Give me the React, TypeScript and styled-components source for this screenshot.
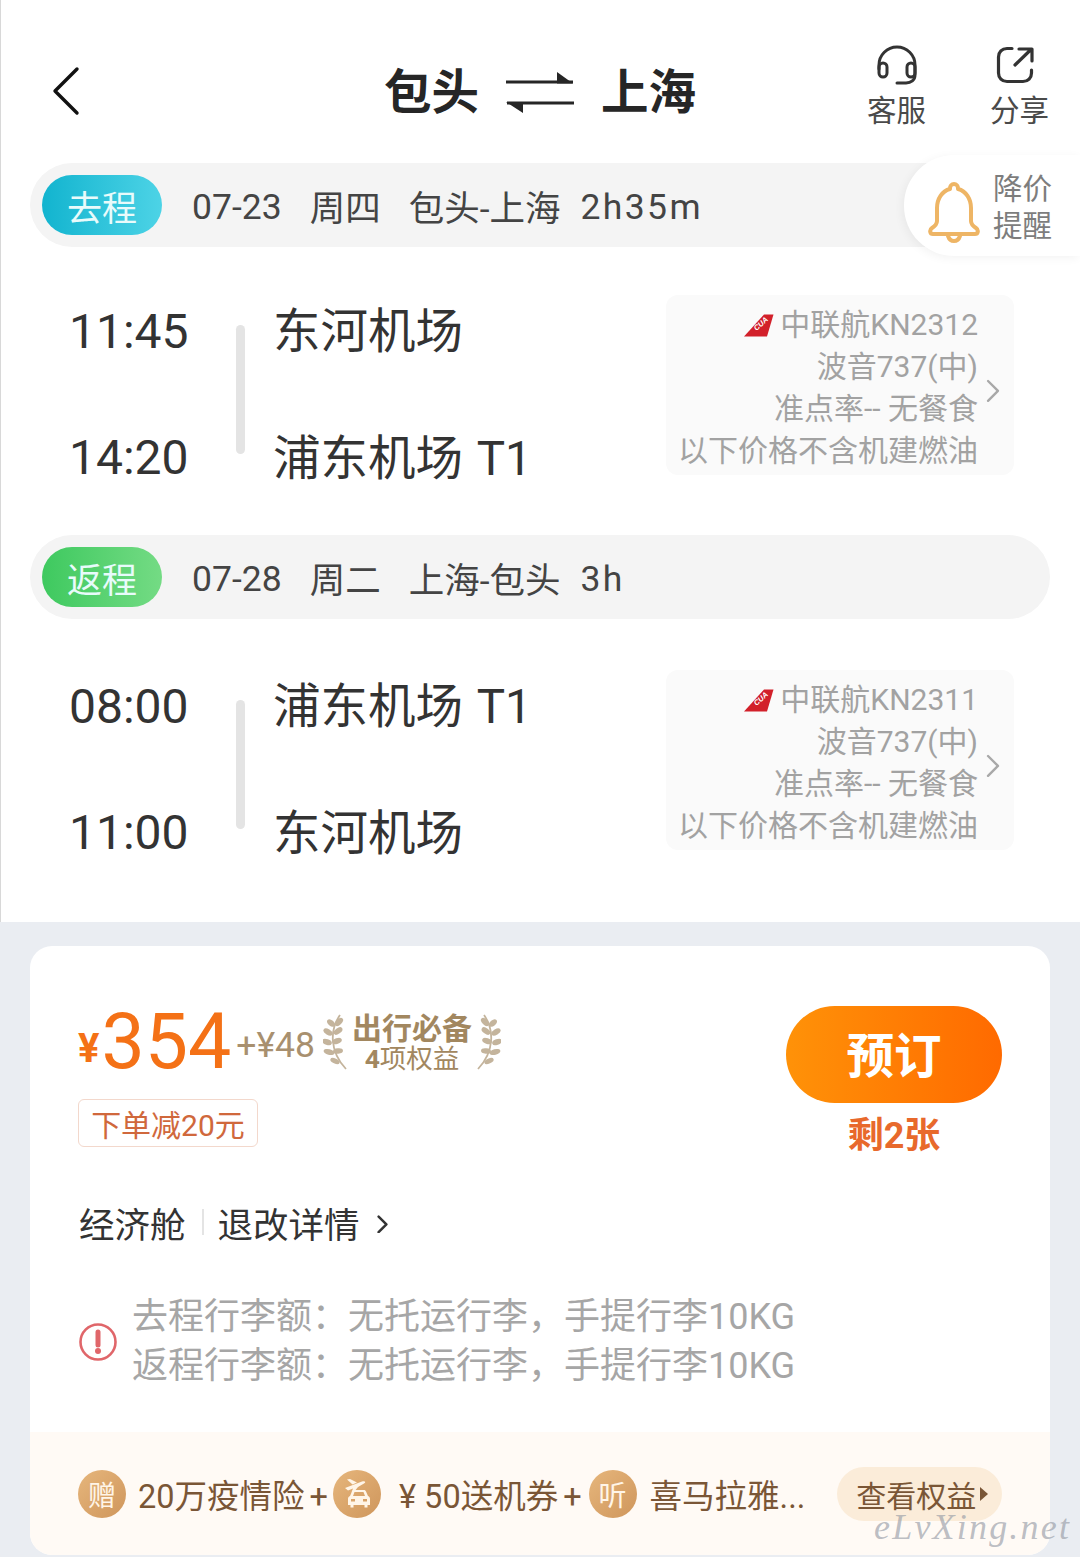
import React from 'react';
import styled, { createGlobalStyle } from 'styled-components';

const Global = createGlobalStyle`
  html, body { margin: 0; padding: 0; background: #eaedf2; }
  * { box-sizing: border-box; }
  body { font-family: Roboto, "Noto Sans CJK SC", sans-serif; }
`;

const Page = styled.div`
  position: relative;
  width: 1080px;
  height: 1557px;
  overflow: hidden;
  background: #eaedf2;
`;

const Top = styled.section`
  height: 922px;
  background: #fff;
  border-left: 1px solid #d8d8d8;
`;

const Header = styled.header`
  display: grid;
  grid-template-columns: 1fr auto 1fr;
  align-items: center;
  height: 163px;
  padding: 22px 31px 0 30px;
`;

const Back = styled.div`
  display: flex;
  align-items: center;
  margin: 0 0 4px 21px;
`;

const Title = styled.h1`
  display: flex;
  align-items: center;
  gap: 27px;
  margin: 0;
  font-size: 47.5px;
  line-height: 60px;
  font-weight: 700;
  color: #262626;
`;

const Actions = styled.div`
  display: flex;
  justify-content: flex-end;
  gap: 64px;
  margin-top: -12px;
`;

const Action = styled.div`
  display: flex;
  flex-direction: column;
  align-items: center;
  gap: 8px;
  font-size: 29.5px;
  line-height: 36px;
  color: #4a4a4a;
`;

const IconSlot = styled.div<{ $shift?: number }>`
  display: flex;
  align-items: center;
  height: 41px;
  margin-right: ${(p) => p.$shift ?? 0}px;
`;

const Segment = styled.div`
  position: relative;
  display: flex;
  align-items: center;
  height: 84px;
  margin: 0 30px 0 29px;
  padding-left: 12px;
  border-radius: 42px;
  background: #f4f4f4;
  font-size: 35.5px;
  color: #444;
`;

const Tag = styled.span<{ $from: string; $to: string }>`
  display: flex;
  align-items: center;
  justify-content: center;
  width: 120px;
  height: 60px;
  margin-right: 30px;
  border-radius: 30px;
  background: linear-gradient(90deg, ${(p) => p.$from}, ${(p) => p.$to});
  font-size: 35px;
  color: #e8fbfb;
`;

const Meta = styled.span<{ $gap: number; $digits?: boolean; $track?: number }>`
  margin-right: ${(p) => p.$gap}px;
  margin-top: ${(p) => (p.$digits ? 4 : 0)}px;
  letter-spacing: ${(p) => p.$track ?? 0}px;
  white-space: nowrap;
`;

const Alert = styled.div`
  position: absolute;
  top: -8px;
  right: -30px;
  display: flex;
  align-items: center;
  gap: 13px;
  width: 176px;
  height: 101px;
  padding-left: 24px;
  border-radius: 50px 0 0 50px;
  background: #fff;
  box-shadow: -2px 2px 10px rgba(0, 0, 0, 0.05);
`;

const AlertBell = styled.div`
  display: flex;
  margin-top: 12px;
`;

const AlertText = styled.div`
  width: 60px;
  margin-top: 4px;
  font-size: 29.5px;
  line-height: 37px;
  color: #7d7d7d;
`;

const Flight = styled.div<{ $top: number; $bottom: number }>`
  display: flex;
  align-items: center;
  height: 180px;
  margin: ${(p) => p.$top}px 66px ${(p) => p.$bottom}px 68px;
`;

const Times = styled.div`
  display: flex;
  flex-direction: column;
  gap: 64.5px;
  width: 167px;
  margin-top: 20px;
  font-size: 48px;
  line-height: 62px;
  color: #333;
`;

const Bar = styled.div`
  width: 9px;
  height: 129px;
  margin: 9px 28px 0 0;
  border-radius: 5px;
  background: #e4e4e4;
`;

const Stops = styled.div`
  display: flex;
  flex-direction: column;
  gap: 64.5px;
  margin-top: 21px;
  font-size: 47.5px;
  line-height: 62px;
  word-spacing: 2px;
  color: #333;
  white-space: nowrap;
`;

const Info = styled.div`
  position: relative;
  display: flex;
  flex-direction: column;
  align-items: flex-end;
  justify-content: center;
  width: 348px;
  height: 180px;
  margin-left: auto;
  padding: 6px 36px 0 0;
  border-radius: 12px;
  background: #fafafa;
  font-size: 30px;
  line-height: 42px;
  color: #a2a2a2;
  white-space: nowrap;
`;

const InfoLine = styled.div`
  display: flex;
  align-items: center;
  gap: 6px;
`;

const InfoChevron = styled.div`
  position: absolute;
  top: 84px;
  right: 14px;
  display: flex;
`;

const Card = styled.section`
  display: flex;
  flex-direction: column;
  height: 609px;
  margin: 24px 30px 0;
  border-radius: 22px;
  background: #fff;
  overflow: hidden;
`;

const PriceRow = styled.div`
  display: flex;
  justify-content: space-between;
  height: 254px;
  padding: 60px 48px 0;
`;

const PriceCol = styled.div`
  display: flex;
  flex-direction: column;
`;

const PriceLine = styled.div`
  display: flex;
  align-items: center;
  height: 72px;
`;

const Yen = styled.span`
  margin-top: 12px;
  font-size: 40px;
  font-weight: 700;
  color: #f47116;
`;

const Amount = styled.span`
  margin-left: 2px;
  font-size: 77px;
  line-height: 72px;
  color: #f47116;
`;

const Extra = styled.span`
  margin: 6px 8px 0 5px;
  font-size: 35.5px;
  color: #a8906f;
`;

const Perk = styled.div`
  display: flex;
  flex-direction: column;
  align-items: center;
  width: 130px;
  margin-top: 2px;
  color: #a2875f;
`;

const PerkTitle = styled.div`
  font-size: 30px;
  line-height: 32px;
  font-weight: 700;
`;

const PerkSub = styled.div`
  font-size: 26.5px;
  line-height: 28px;
`;

const Coupon = styled.div`
  display: flex;
  align-items: center;
  justify-content: center;
  width: 180px;
  height: 48px;
  margin-top: 21px;
  border: 1px solid #f3d8cc;
  border-radius: 6px;
  font-size: 30px;
  color: #d0683c;
`;

const BookCol = styled.div`
  display: flex;
  flex-direction: column;
  align-items: center;
`;

const BookButton = styled.button`
  width: 216px;
  height: 97px;
  padding: 0 0 5px;
  border: 0;
  border-radius: 49px;
  background: linear-gradient(90deg, #ff9208, #ff6a00);
  font-family: inherit;
  font-size: 47.5px;
  font-weight: 700;
  color: #fff;
`;

const SeatsLeft = styled.div`
  margin-top: 11px;
  font-size: 36px;
  line-height: 44px;
  font-weight: 700;
  color: #e8692c;
`;

const Cabin = styled.div`
  display: flex;
  align-items: center;
  height: 44px;
  padding-left: 49px;
  font-size: 35.5px;
  color: #333;
`;

const Divider = styled.span`
  width: 2px;
  height: 26px;
  margin: 0 14px 0 16px;
  background: #e4e4e4;
`;

const CabinChevron = styled.span`
  display: flex;
  margin: 4px 0 0 17px;
`;

const Baggage = styled.div`
  display: flex;
  align-items: center;
  gap: 15px;
  margin-top: 49px;
  padding-left: 49px;
  font-size: 36px;
  line-height: 49px;
  color: #a6a6a6;
  white-space: nowrap;
`;

const Benefits = styled.div`
  display: flex;
  align-items: center;
  height: 123px;
  margin-top: auto;
  padding-left: 48px;
  background: #fffaf5;
  font-size: 32.5px;
  color: #7a5636;
  white-space: nowrap;
`;

const Medal = styled.span`
  display: flex;
  align-items: center;
  justify-content: center;
  flex: none;
  width: 48px;
  height: 48px;
  border-radius: 50%;
  background: linear-gradient(135deg, #e6b67c, #cf965c);
  font-size: 28px;
  color: #fff5e8;
`;

const Benefit = styled.span<{ $left: number; $right: number }>`
  margin: 0 ${(p) => p.$right}px 0 ${(p) => p.$left}px;
`;

const Plus = styled.span`
  margin-left: 5px;
`;

const BenefitButton = styled.div`
  display: flex;
  align-items: center;
  gap: 4px;
  width: 165px;
  height: 54px;
  margin-left: 32px;
  padding-left: 19px;
  border-radius: 27px;
  background: #fbecd9;
  font-size: 30px;
  color: #7a5636;
`;

const Caret = styled.span`
  width: 0;
  height: 0;
  border-top: 7px solid transparent;
  border-bottom: 7px solid transparent;
  border-left: 8px solid #7a5636;
`;

const Watermark = styled.div`
  position: absolute;
  left: 874px;
  top: 1505px;
  font-family: "Liberation Serif", serif;
  font-style: italic;
  font-size: 36px;
  line-height: 44px;
  letter-spacing: 2.2px;
  color: rgba(150, 155, 165, 0.65);
`;

const BackIcon = () => (
  <svg width="30" height="50" viewBox="0 0 30 50" fill="none">
    <path d="M25 3 3 25l22 22" stroke="#111" strokeWidth="3.4" strokeLinecap="round" strokeLinejoin="round" />
  </svg>
);

const SwapIcon = () => (
  <svg width="68" height="42" viewBox="0 0 68 42">
    <path d="M0 10h67M1 31h67" stroke="#262626" strokeWidth="3.2" fill="none" />
    <path d="M51 0l16 11.500H51zM0 30h17v11z" fill="#262626" />
  </svg>
);

const HeadsetIcon = () => (
  <svg width="42" height="40" viewBox="0 0 42 40" fill="none" stroke="#333" strokeWidth="3" strokeLinecap="round">
    <path d="M3 24v-4a18 18 0 0 1 36 0v10c0 5-4 8-9 8h-9" />
    <rect x="3" y="18" width="8" height="14" rx="4" />
    <rect x="31" y="18" width="8" height="14" rx="4" />
  </svg>
);

const ShareIcon = () => (
  <svg width="39" height="38" viewBox="0 0 39 38" fill="none" stroke="#333" strokeWidth="3.2" strokeLinecap="round" strokeLinejoin="round">
    <path d="M16 2.500h-5C6 2.500 2.500 6 2.500 11v16c0 5 3.500 8.500 8.500 8.500h16c5 0 8.500-3.500 8.500-8.500v-3" />
    <path d="M19 19 35 3.500M23 3h13v12" />
  </svg>
);

const BellIcon = () => (
  <svg width="52" height="62" viewBox="0 0 52 62" fill="none" stroke="#eeb565" strokeWidth="4" strokeLinejoin="round" strokeLinecap="round">
    <path d="M26 3c-2.500 0-4 2-4 4v1C14 10 9 18 9 27v13c0 3-2 5-5 7-3 2-2 6 1 6h42c3 0 4-4 1-6-3-2-5-4-5-7V27c0-9-5-17-13-19V7c0-2-1.500-4-4-4z" />
    <path d="M20 55c1 3 3 5 6 5s5-2 6-5" />
  </svg>
);

const Chevron = ({ size = 14, color = '#a8a8a8', weight = 2.4 }: { size?: number; color?: string; weight?: number }) => (
  <svg width={size} height={size * 1.7} viewBox="0 0 14 24" fill="none">
    <path d="M2 2l10 10L2 22" stroke={color} strokeWidth={weight} strokeLinecap="round" strokeLinejoin="round" />
  </svg>
);

const TailLogo = () => (
  <svg width="30" height="23" viewBox="0 0 30 23">
    <path d="M0 22.500 20 .5h9.500L23 22.500z" fill="#d2202a" />
    <text x="12.500" y="17" fontSize="7.500" fontWeight="700" fontStyle="italic" fill="#fff" fontFamily="Liberation Sans, sans-serif" transform="rotate(-42 12.500 17)">CUA</text>
  </svg>
);

const Laurel = ({ flip }: { flip?: boolean }) => (
  <svg width="24" height="58" viewBox="0 0 24 58" style={flip ? { transform: 'scaleX(-1)' } : undefined}>
    <path d="M17 2C7 16 6 38 23 56" fill="none" stroke="#c4b49c" strokeWidth="1.800" />
    <g fill="#c4b49c">
      <ellipse cx="16" cy="9" rx="5" ry="2.800" transform="rotate(-45 16 9)" />
      <ellipse cx="8" cy="10" rx="4.500" ry="2.800" transform="rotate(40 8 10)" />
      <ellipse cx="15" cy="18" rx="5" ry="2.800" transform="rotate(-35 15 18)" />
      <ellipse cx="5" cy="19" rx="5" ry="2.800" transform="rotate(30 5 19)" />
      <ellipse cx="14" cy="28" rx="5" ry="2.800" transform="rotate(-20 14 28)" />
      <ellipse cx="4" cy="29" rx="5" ry="2.800" transform="rotate(20 4 29)" />
      <ellipse cx="15" cy="38" rx="5" ry="2.800" transform="rotate(-5 15 38)" />
      <ellipse cx="6" cy="39" rx="5.500" ry="2.800" transform="rotate(15 6 39)" />
      <ellipse cx="12" cy="48" rx="5" ry="2.500" transform="rotate(25 12 48)" />
    </g>
  </svg>
);

const AlertIcon = () => (
  <svg width="38" height="38" viewBox="0 0 38 38" fill="none">
    <circle cx="19" cy="19" r="17.500" stroke="#e0666a" strokeWidth="2.600" />
    <path d="M19 9v13" stroke="#e0666a" strokeWidth="5" strokeLinecap="round" />
    <circle cx="19" cy="28" r="3" fill="#e0666a" />
  </svg>
);

const TripIcon = () => (
  <svg width="28" height="30" viewBox="0 0 28 30" fill="#fff5e8">
    <path d="M2 9 19 2.500c3-1 4.500.5 2 2L15 8l-4 5-2.500.5L10 9.500 5 11.500z" />
    <path d="M4 .5 7 0l7 3.500-4.500 2z" />
    <path
      fillRule="evenodd"
      d="M7 17l2-4.500c.5-1 1-1.500 2-1.500h10c1 0 1.500.5 2 1.500l2 4.500c1.500.5 2 1.500 2 3v6h-2.500v2.500h-3V26h-11v2.500h-3V26H5v-6c0-1.500.5-2.500 2-3zM10 17h12l-1.500-4h-9zM8 20v2.500h4V20zM20 20v2.500h4V20z"
    />
  </svg>
);

type Leg = {
  top: number;
  bottom: number;
  times: [string, string];
  stops: [string, string];
  flightNo: string;
};

const FlightBlock = ({ leg }: { leg: Leg }) => (
  <Flight $top={leg.top} $bottom={leg.bottom}>
    <Times>
      <div>{leg.times[0]}</div>
      <div>{leg.times[1]}</div>
    </Times>
    <Bar />
    <Stops>
      <div>{leg.stops[0]}</div>
      <div>{leg.stops[1]}</div>
    </Stops>
    <Info>
      <InfoLine><TailLogo />{leg.flightNo}</InfoLine>
      <InfoLine>波音737(中)</InfoLine>
      <InfoLine>准点率-- 无餐食</InfoLine>
      <InfoLine>以下价格不含机建燃油</InfoLine>
      <InfoChevron><Chevron /></InfoChevron>
    </Info>
  </Flight>
);

export default function App() {
  return (
    <Page>
      <Global />
      <Top>
        <Header>
          <Back><BackIcon /></Back>
          <Title>
            <span>包头</span>
            <SwapIcon />
            <span>上海</span>
          </Title>
          <Actions>
            <Action><IconSlot $shift={-2}><HeadsetIcon /></IconSlot>客服</Action>
            <Action><IconSlot $shift={7}><ShareIcon /></IconSlot>分享</Action>
          </Actions>
        </Header>

        <Segment>
          <Tag $from="#12b4cf" $to="#4dd3e6">去程</Tag>
          <Meta $gap={28} $digits>07-23</Meta>
          <Meta $gap={28}>周四</Meta>
          <Meta $gap={20}>包头-上海</Meta>
          <Meta $gap={0} $digits $track={2.4}>2h35m</Meta>
          <Alert>
            <AlertBell><BellIcon /></AlertBell>
            <AlertText>降价提醒</AlertText>
          </Alert>
        </Segment>

        <FlightBlock
          leg={{
            top: 48,
            bottom: 60,
            times: ['11:45', '14:20'],
            stops: ['东河机场', '浦东机场 T1'],
            flightNo: '中联航KN2312',
          }}
        />

        <Segment>
          <Tag $from="#3ec95f" $to="#74db84">返程</Tag>
          <Meta $gap={28} $digits>07-28</Meta>
          <Meta $gap={28}>周二</Meta>
          <Meta $gap={20}>上海-包头</Meta>
          <Meta $gap={0} $digits $track={2.4}>3h</Meta>
        </Segment>

        <FlightBlock
          leg={{
            top: 51,
            bottom: 0,
            times: ['08:00', '11:00'],
            stops: ['浦东机场 T1', '东河机场'],
            flightNo: '中联航KN2311',
          }}
        />
      </Top>

      <Card>
        <PriceRow>
          <PriceCol>
            <PriceLine>
              <Yen>¥</Yen>
              <Amount>354</Amount>
              <Extra>+¥48</Extra>
              <Laurel />
              <Perk>
                <PerkTitle>出行必备</PerkTitle>
                <PerkSub><b>4</b>项权益</PerkSub>
              </Perk>
              <Laurel flip />
            </PriceLine>
            <Coupon>下单减20元</Coupon>
          </PriceCol>
          <BookCol>
            <BookButton>预订</BookButton>
            <SeatsLeft>剩2张</SeatsLeft>
          </BookCol>
        </PriceRow>

        <Cabin>
          经济舱
          <Divider />
          退改详情
          <CabinChevron><Chevron size={11} color="#333" weight={3.2} /></CabinChevron>
        </Cabin>

        <Baggage>
          <AlertIcon />
          <div>
            <div>去程行李额：无托运行李，手提行李10KG</div>
            <div>返程行李额：无托运行李，手提行李10KG</div>
          </div>
        </Baggage>

        <Benefits>
          <Medal>赠</Medal>
          <Benefit $left={12} $right={5}>20万疫情险<Plus>+</Plus></Benefit>
          <Medal><TripIcon /></Medal>
          <Benefit $left={18} $right={7}>¥ 50送机券<Plus>+</Plus></Benefit>
          <Medal>听</Medal>
          <Benefit $left={13} $right={0}>喜马拉雅...</Benefit>
          <BenefitButton>查看权益<Caret /></BenefitButton>
        </Benefits>
      </Card>

      <Watermark>eLvXing.net</Watermark>
    </Page>
  );
}
